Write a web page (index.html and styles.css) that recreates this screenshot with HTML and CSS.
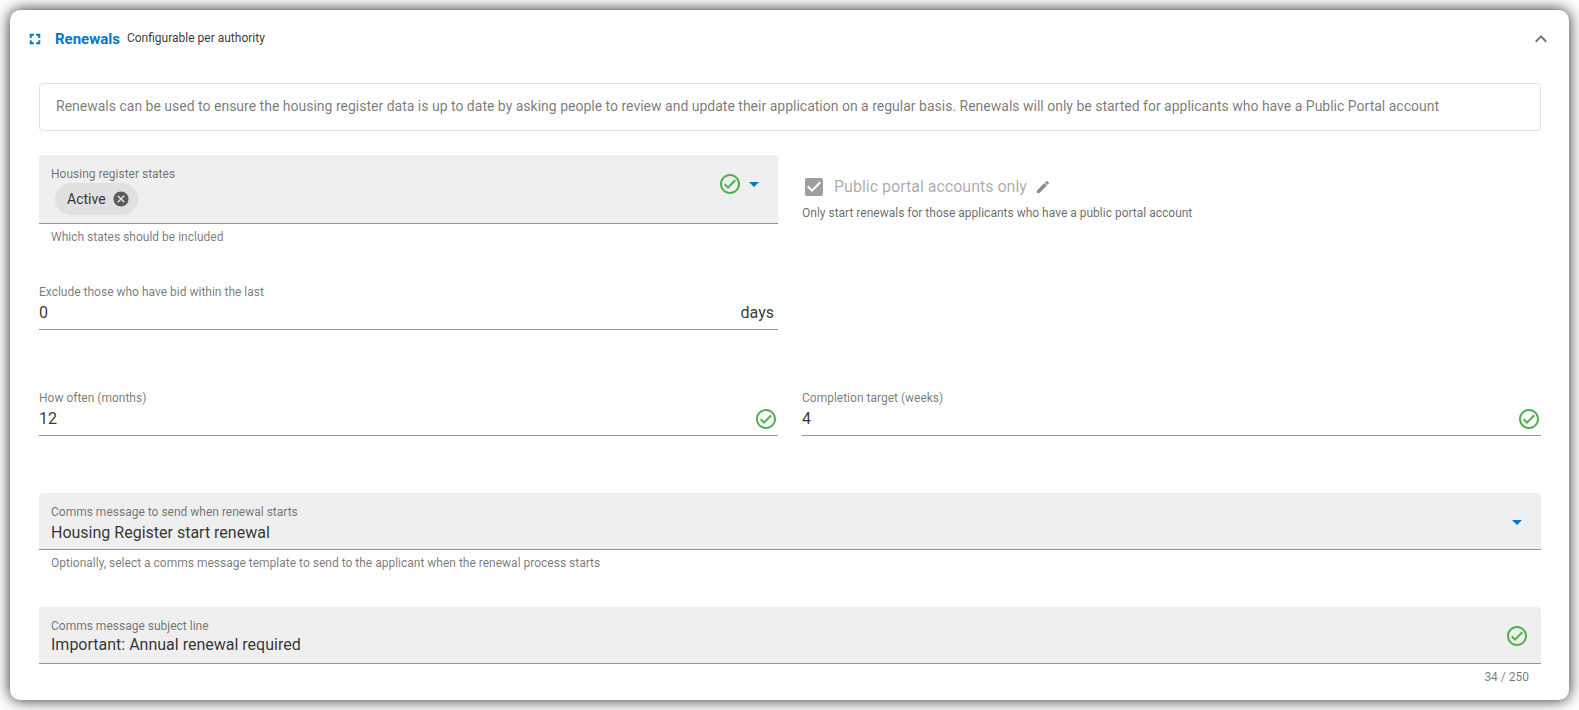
FILE: index.html
```html
<!DOCTYPE html>
<html lang="en">
<head>
  <meta charset="UTF-8">
  <meta name="viewport" content="width=device-width, initial-scale=1.0">
  <title>Renewals</title>
  <link rel="stylesheet" href="styles.css">
</head>
<body>
  <!-- Shared icons -->
  <svg class="sprite" aria-hidden="true">
    <symbol id="check-circle" viewBox="0 0 24 24">
      <path d="M12 2C6.5 2 2 6.5 2 12S6.5 22 12 22 22 17.5 22 12 17.5 2 12 2M12 20C7.59 20 4 16.41 4 12S7.59 4 12 4 20 7.59 20 12 16.41 20 12 20M16.59 7.58L10 14.17L7.41 11.59L6 13L10 17L18 9L16.59 7.58Z"/>
    </symbol>
    <symbol id="caret" viewBox="0 0 24 24">
      <path d="M7 10L12 15L17 10H7Z"/>
    </symbol>
  </svg>

  <section class="card">
    <header class="card-header">
      <button class="icon-button expand" type="button" aria-label="Full screen">
        <svg viewBox="0 0 24 24"><path d="M5 5H10.5V7.6H7.6V10.5H5V5M13.5 5H19V10.5H16.4V7.6H13.5V5M16.4 13.5H19V19H13.5V16.4H16.4V13.5M10.5 16.4V19H5V13.5H7.6V16.4H10.5Z"/></svg>
      </button>
      <h1>Renewals</h1>
      <span class="subtitle">Configurable per authority</span>
      <button class="icon-button collapse" type="button" aria-label="Collapse">
        <svg viewBox="0 0 24 24"><path d="M7.41 15.41L12 10.83L16.59 15.41L18 14L12 8L6 14L7.41 15.41Z"/></svg>
      </button>
    </header>

    <form class="card-body">
      <p class="info">Renewals can be used to ensure the housing register data is up to date by asking people to review and update their application on a regular basis. Renewals will only be started for applicants who have a Public Portal account</p>

      <div class="fields">
        <div class="field">
          <div class="control filled">
            <div class="control-main">
              <span class="label" id="states-label">Housing register states</span>
              <div class="chips">
                <span class="chip">Active
                  <button class="icon-button chip-close" type="button" aria-label="Remove Active">
                    <svg viewBox="0 0 24 24"><path d="M12 2C6.47 2 2 6.47 2 12S6.47 22 12 22 22 17.53 22 12 17.53 2 12 2M17 15.59L15.59 17L12 13.41L8.41 17L7 15.59L10.59 12L7 8.41L8.41 7L12 10.59L15.59 7L17 8.41L13.41 12L17 15.59Z"/></svg>
                  </button>
                </span>
              </div>
            </div>
            <svg class="icon valid"><use href="#check-circle"/></svg>
            <button class="icon-button caret" type="button" aria-labelledby="states-label">
              <svg><use href="#caret"/></svg>
            </button>
          </div>
          <div class="details">Which states should be included</div>
        </div>

        <div class="field checkbox-field">
          <div class="checkbox-row">
            <input type="checkbox" id="portalOnly" checked disabled>
            <label for="portalOnly">Public portal accounts only</label>
            <svg class="icon pencil" viewBox="0 0 24 24"><path d="M20.71 7.04C21.1 6.65 21.1 6 20.71 5.63L18.37 3.29C18 2.9 17.35 2.9 16.96 3.29L15.12 5.12L18.87 8.87M3 17.25V21H6.75L17.81 9.93L14.06 6.18L3 17.25Z"/></svg>
          </div>
          <div class="checkbox-hint">Only start renewals for those applicants who have a public portal account</div>
        </div>

        <div class="field">
          <div class="control plain">
            <div class="control-main">
              <label class="label" for="exclude">Exclude those who have bid within the last</label>
              <input type="text" id="exclude" value="0">
            </div>
            <span class="suffix">days</span>
          </div>
          <div class="details"></div>
        </div>

        <div class="field first">
          <div class="control plain">
            <div class="control-main">
              <label class="label" for="often">How often (months)</label>
              <input type="text" id="often" value="12">
            </div>
            <svg class="icon valid"><use href="#check-circle"/></svg>
          </div>
          <div class="details"></div>
        </div>

        <div class="field">
          <div class="control plain">
            <div class="control-main">
              <label class="label" for="target">Completion target (weeks)</label>
              <input type="text" id="target" value="4">
            </div>
            <svg class="icon valid"><use href="#check-circle"/></svg>
          </div>
          <div class="details"></div>
        </div>

        <div class="field wide">
          <div class="control filled">
            <div class="control-main">
              <label class="label" for="message">Comms message to send when renewal starts</label>
              <select id="message">
                <option>Housing Register start renewal</option>
              </select>
            </div>
            <svg class="icon caret"><use href="#caret"/></svg>
          </div>
          <div class="details">Optionally, select a comms message template to send to the applicant when the renewal process starts</div>
        </div>

        <div class="field wide">
          <div class="control filled">
            <div class="control-main">
              <label class="label" for="subject">Comms message subject line</label>
              <input type="text" id="subject" maxlength="250" value="Important: Annual renewal required">
            </div>
            <svg class="icon valid"><use href="#check-circle"/></svg>
          </div>
          <div class="details counter">34 / 250</div>
        </div>
      </div>
    </form>
  </section>
</body>
</html>
```

FILE: styles.css
```css
* {
  box-sizing: border-box;
}

body {
  font-family: Roboto, "Liberation Sans", sans-serif;
  font-size: 16px;
  margin: 0;
  padding: 10px;
  background: #ffffff;
  color: rgba(0, 0, 0, 0.8);
}

.sprite {
  display: none;
}

/* Card */
.card {
  background: #ffffff;
  border-radius: 10px;
  box-shadow: 0 0 15px rgba(0, 0, 0, 0.87);
}

.card-header {
  display: flex;
  align-items: center;
  height: 57px;
  padding: 0 16px;
}

.card-body {
  padding: 16px 28px 15px 29px;
}

h1 {
  font-size: 15px;
  font-weight: 700;
  color: #0077c8;
  margin: 0 7px 0 11px;
}

.subtitle {
  font-size: 12px;
  line-height: 15px;
}

/* Icons */
.icon,
.icon-button {
  flex: none;
  width: 24px;
  height: 24px;
}

.icon,
.icon-button svg {
  display: block;
  fill: currentColor;
}

.icon-button {
  padding: 0;
  border: none;
  background: none;
  cursor: pointer;
}

.icon-button svg {
  width: 100%;
  height: 100%;
}

.expand {
  width: 18px;
  height: 18px;
  color: #0077c8;
}

.collapse {
  margin-left: auto;
  color: rgba(0, 0, 0, 0.54);
}

.valid {
  color: #4caf50;
}

.caret {
  color: #0077c8;
}

/* Info text */
.info {
  margin: 0 0 24px;
  padding: 12px 16px 14px;
  border: 1px solid #e0e0e0;
  border-radius: 4px;
  font-size: 14px;
  line-height: 20px;
  color: rgba(0, 0, 0, 0.54);
}

/* Fields */
.fields {
  display: grid;
  grid-template-columns: 1fr 1fr;
  gap: 36px 24px;
}

.first {
  grid-column-start: 1;
}

.wide {
  grid-column: 1 / -1;
}

.control {
  display: flex;
  border-bottom: 1px solid #949494;
}

.control-main {
  flex: 1;
  min-width: 0;
}

.filled {
  padding: 11px 12px 0;
  background: #efefef;
  border-radius: 4px 4px 0 0;
}

.filled .icon,
.filled .icon-button.caret {
  margin-top: 6px;
}

.plain {
  align-items: flex-end;
  padding: 3px 0 4px;
}

.label {
  display: block;
  font-size: 12px;
  line-height: 16px;
  color: rgba(0, 0, 0, 0.54);
}

.control input,
.control select {
  display: block;
  width: 100%;
  height: 25px;
  padding: 0;
  border: none;
  outline: none;
  background: transparent;
  font-family: inherit;
  font-size: 16px;
  color: inherit;
}

.filled input {
  height: 21px;
  margin-bottom: 8px;
}

.control select {
  height: 25px;
  margin-bottom: 4px;
  appearance: none;
}

.suffix {
  padding-right: 4px;
  line-height: 25px;
}

.details {
  min-height: 16px;
  margin-top: 5px;
  padding: 0 12px;
  font-size: 12px;
  line-height: 16px;
  color: rgba(0, 0, 0, 0.54);
}

.counter {
  text-align: right;
}

/* Chips */
.chips {
  padding: 1px 4px 8px;
}

.chip {
  display: inline-flex;
  align-items: center;
  gap: 6px;
  height: 32px;
  padding: 0 8px 0 12px;
  border-radius: 16px;
  background: #e0e0e0;
  font-size: 14px;
  line-height: 18px;
  vertical-align: top;
}

.chip-close {
  width: 18px;
  height: 18px;
  color: rgba(0, 0, 0, 0.6);
}

/* Checkbox */
.checkbox-field {
  padding-top: 20px;
}

.checkbox-row {
  display: flex;
  align-items: center;
  height: 24px;
  line-height: 20px;
  color: rgba(0, 0, 0, 0.35);
}

.checkbox-row input {
  appearance: none;
  width: 18px;
  height: 18px;
  margin: 0 11px 0 3px;
  border-radius: 2px;
  background: #9e9e9e;
}

.checkbox-row input:checked {
  background-image: url("data:image/svg+xml,%3Csvg xmlns='http://www.w3.org/2000/svg' viewBox='3 3 18 18'%3E%3Cpath fill='white' d='M10 17L5 12L6.41 10.59L10 14.17L17.59 6.58L19 8L10 17Z'/%3E%3C/svg%3E");
}

.pencil {
  width: 16px;
  height: 16px;
  margin-left: 8px;
  color: #8a8a8a;
}

.checkbox-hint {
  margin-top: 6px;
  font-size: 12px;
  line-height: 16px;
  color: rgba(0, 0, 0, 0.6);
}
```
